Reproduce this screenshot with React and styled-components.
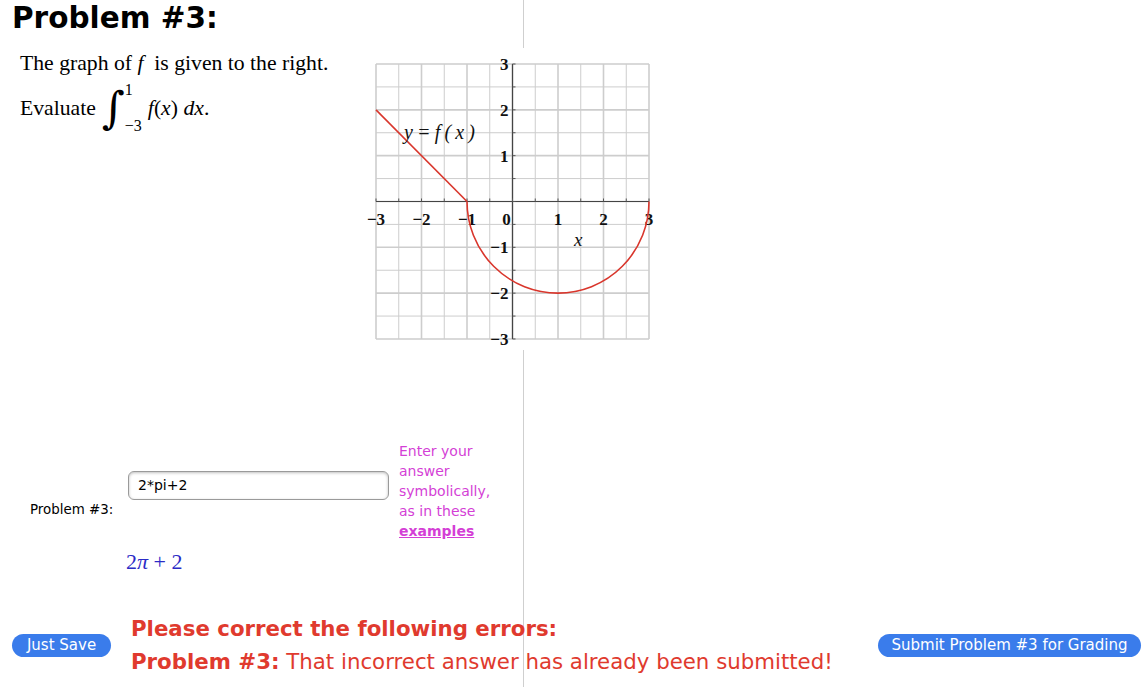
import React from "react";
import styled, { createGlobalStyle } from "styled-components";

const Global = createGlobalStyle`
  html, body { margin: 0; padding: 0; background: #fff; }
  body { font-family: "DejaVu Sans", Verdana, sans-serif; color: #000; }
`;

const Page = styled.div`
  position: relative;
  width: 1146px;
  height: 687px;
  overflow: hidden;
  display: flex;
  flex-direction: column;
`;

const Divider = styled.div`
  position: absolute;
  left: 523px;
  top: 0;
  bottom: 0;
  width: 1px;
  background: #cfcfcf;
  z-index: 0;
`;

const Heading = styled.h1`
  margin: 0;
  padding: 0 0 0 12px;
  font-family: "DejaVu Sans", Verdana, sans-serif;
  font-weight: bold;
  font-size: 29.5px;
  line-height: 36px;
  position: relative;
  z-index: 1;
`;

const ProblemRow = styled.div`
  display: flex;
  align-items: flex-start;
  padding-top: 12px;
`;

const Statement = styled.div`
  width: 345px;
  padding-left: 20px;
  font-family: "Liberation Serif", "Times New Roman", serif;
  font-size: 21.7px;
  position: relative;
  z-index: 1;
`;

const Line = styled.p`
  margin: 0;
  line-height: 30px;
`;

const EvalLine = styled.div`
  display: flex;
  align-items: center;
  height: 60px;
`;

const IntSign = styled.span`
  font-family: "DejaVu Serif", serif;
  font-size: 44px;
  line-height: 1;
  margin-left: 6px;
  display: inline-block;
`;

const Limits = styled.span`
  display: inline-flex;
  flex-direction: column;
  justify-content: space-between;
  height: 52px;
  font-size: 16px;
  line-height: 16px;
  margin-left: 0;
`;

const Integrand = styled.span`
  font-style: italic;
  margin-left: 6px;
  & > span { font-style: normal; }
`;

const GraphBox = styled.div`
  width: 295px;
  height: 302px;
  background: #fff;
  position: relative;
  z-index: 1;
`;

const AnswerRow = styled.div`
  display: flex;
  align-items: center;
  margin-top: 91px;
  position: relative;
  z-index: 1;
`;

const Label = styled.span`
  width: 128px;
  padding-left: 30px;
  font-size: 13.4px;
  margin-top: 36px;
  box-sizing: border-box;
  white-space: nowrap;
`;

const Input = styled.input`
  width: 261px;
  height: 29px;
  box-sizing: border-box;
  border: 1px solid #9a9a9a;
  border-radius: 6px;
  box-shadow: inset 0 1px 3px rgba(0, 0, 0, 0.25);
  padding: 0 9px;
  font-family: "DejaVu Sans", Verdana, sans-serif;
  font-size: 14px;
  color: #000;
  margin-bottom: 12px;
  outline: none;
`;

const Hint = styled.div`
  margin-left: 10px;
  width: 110px;
  font-size: 14px;
  line-height: 20px;
  color: #d43fd6;
  & a { color: #d43fd6; font-weight: bold; text-decoration: underline; }
`;

const Preview = styled.div`
  padding-left: 126px;
  margin-top: 8px;
  font-family: "Liberation Serif", "Times New Roman", serif;
  font-size: 22px;
  color: #2b2bc6;
  position: relative;
  z-index: 1;
  & i { font-style: italic; }
`;

const BottomRow = styled.div`
  display: flex;
  align-items: center;
  margin-top: 37px;
  padding: 0 5px 0 12px;
  position: relative;
  z-index: 1;
`;

const Button = styled.button`
  height: 23px;
  padding: 0;
  width: ${(p) => p.$w}px;
  border: none;
  border-radius: 12px;
  background: #3a7ceb;
  color: #fff;
  font-family: "DejaVu Sans", Verdana, sans-serif;
  font-size: 15px;
  line-height: 23px;
  flex-shrink: 0;
`;

const Messages = styled.div`
  margin-left: 20px;
  flex: 1;
  color: #e03a2e;
  font-size: 21.3px;
`;

const MsgLine = styled.div`
  line-height: 33px;
  font-weight: ${(p) => (p.$bold ? "bold" : "normal")};
  & b { font-weight: bold; }
`;

const X = (u) => 11 + (u + 3) * 45.5;
const Y = (v) => 16 + (3 - v) * 45.83;

function Graph() {
  const grid = [];
  for (let i = 0; i <= 12; i++) {
    const u = -3 + i * 0.5;
    grid.push(<line key={"v" + i} x1={X(u)} y1={Y(3)} x2={X(u)} y2={Y(-3)} stroke="#cdcdcd" strokeWidth={i % 2 === 0 ? 1.6 : 1} />);
    grid.push(<line key={"h" + i} x1={X(-3)} y1={Y(u)} x2={X(3)} y2={Y(u)} stroke="#cdcdcd" strokeWidth={i % 2 === 0 ? 1.6 : 1} />);
  }
  const ticks = [];
  for (let i = 0; i <= 12; i++) {
    const u = -3 + i * 0.5;
    ticks.push(<line key={"tx" + i} x1={X(u)} y1={Y(0)} x2={X(u)} y2={Y(0) - 3} stroke="#555" strokeWidth="1" />);
    ticks.push(<line key={"ty" + i} x1={X(0)} y1={Y(u)} x2={X(0) + 3} y2={Y(u)} stroke="#555" strokeWidth="1" />);
  }
  const labStyle = { fontFamily: '"Liberation Serif", serif', fontWeight: "bold", fontSize: 17 };
  const r = 2;
  const arc = `M ${X(-1)} ${Y(0)} A ${r * 45.5} ${r * 45.83} 0 0 0 ${X(3)} ${Y(0)}`;
  return (
    <svg width="295" height="302" viewBox="0 0 295 302">
      {grid}
      <line x1={X(0)} y1={Y(3)} x2={X(0)} y2={Y(-3)} stroke="#444" strokeWidth="1.2" />
      <line x1={X(-3)} y1={Y(0)} x2={X(3)} y2={Y(0)} stroke="#444" strokeWidth="1.2" />
      {ticks}
      <g style={labStyle} fill="#111">
        <text x={X(0) - 4} y={Y(3) + 6} textAnchor="end">3</text>
        <text x={X(0) - 4} y={Y(2) + 6} textAnchor="end">2</text>
        <text x={X(0) - 4} y={Y(1) + 6} textAnchor="end">1</text>
        <text x={X(0) - 4} y={Y(-1) + 6} textAnchor="end">−1</text>
        <text x={X(0) - 4} y={Y(-2) + 6} textAnchor="end">−2</text>
        <text x={X(0) - 4} y={Y(-3) + 6} textAnchor="end">−3</text>
        <text x={X(-3)} y={Y(0) + 24} textAnchor="middle">−3</text>
        <text x={X(-2)} y={Y(0) + 24} textAnchor="middle">−2</text>
        <text x={X(-1)} y={Y(0) + 24} textAnchor="middle">−1</text>
        <text x={X(0) - 6} y={Y(0) + 24} textAnchor="middle">0</text>
        <text x={X(1)} y={Y(0) + 24} textAnchor="middle">1</text>
        <text x={X(2)} y={Y(0) + 24} textAnchor="middle">2</text>
        <text x={X(3)} y={Y(0) + 24} textAnchor="middle">3</text>
      </g>
      <path d={`M ${X(-3)} ${Y(2)} L ${X(-1)} ${Y(0)}`} stroke="#d9362c" strokeWidth="1.6" fill="none" />
      <path d={arc} stroke="#d9362c" strokeWidth="1.6" fill="none" />
      <text x="39" y="91" fontFamily='"Liberation Serif", serif' fontStyle="italic" fontSize="20" fill="#111" textLength="71" lengthAdjust="spacing">y=f(x)</text>
      <text x="209" y="198" fontFamily='"Liberation Serif", serif' fontStyle="italic" fontSize="19" fill="#111">x</text>
    </svg>
  );
}

export default function App() {
  return (
    <Page>
      <Global />
      <Divider />
      <Heading>Problem #3:</Heading>
      <ProblemRow>
        <Statement>
          <Line>
            The graph of <i>f</i>&nbsp; is given to the right.
          </Line>
          <EvalLine>
            Evaluate
            <IntSign>∫</IntSign>
            <Limits>
              <span>1</span>
              <span>−3</span>
            </Limits>
            <Integrand>
              f<span>(</span>x<span>)</span> dx<span>.</span>
            </Integrand>
          </EvalLine>
        </Statement>
        <GraphBox>
          <Graph />
        </GraphBox>
      </ProblemRow>
      <AnswerRow>
        <Label>Problem #3:</Label>
        <Input defaultValue="2*pi+2" readOnly />
        <Hint>
          Enter your answer symbolically, as in these <a href="#">examples</a>
        </Hint>
      </AnswerRow>
      <Preview>
        2<i>π</i> + 2
      </Preview>
      <BottomRow>
        <Button $w={99}>Just Save</Button>
        <Messages>
          <MsgLine $bold>Please correct the following errors:</MsgLine>
          <MsgLine>
            <b>Problem #3:</b> That incorrect answer has already been submitted!
          </MsgLine>
        </Messages>
        <Button $w={263}>Submit Problem #3 for Grading</Button>
      </BottomRow>
    </Page>
  );
}
